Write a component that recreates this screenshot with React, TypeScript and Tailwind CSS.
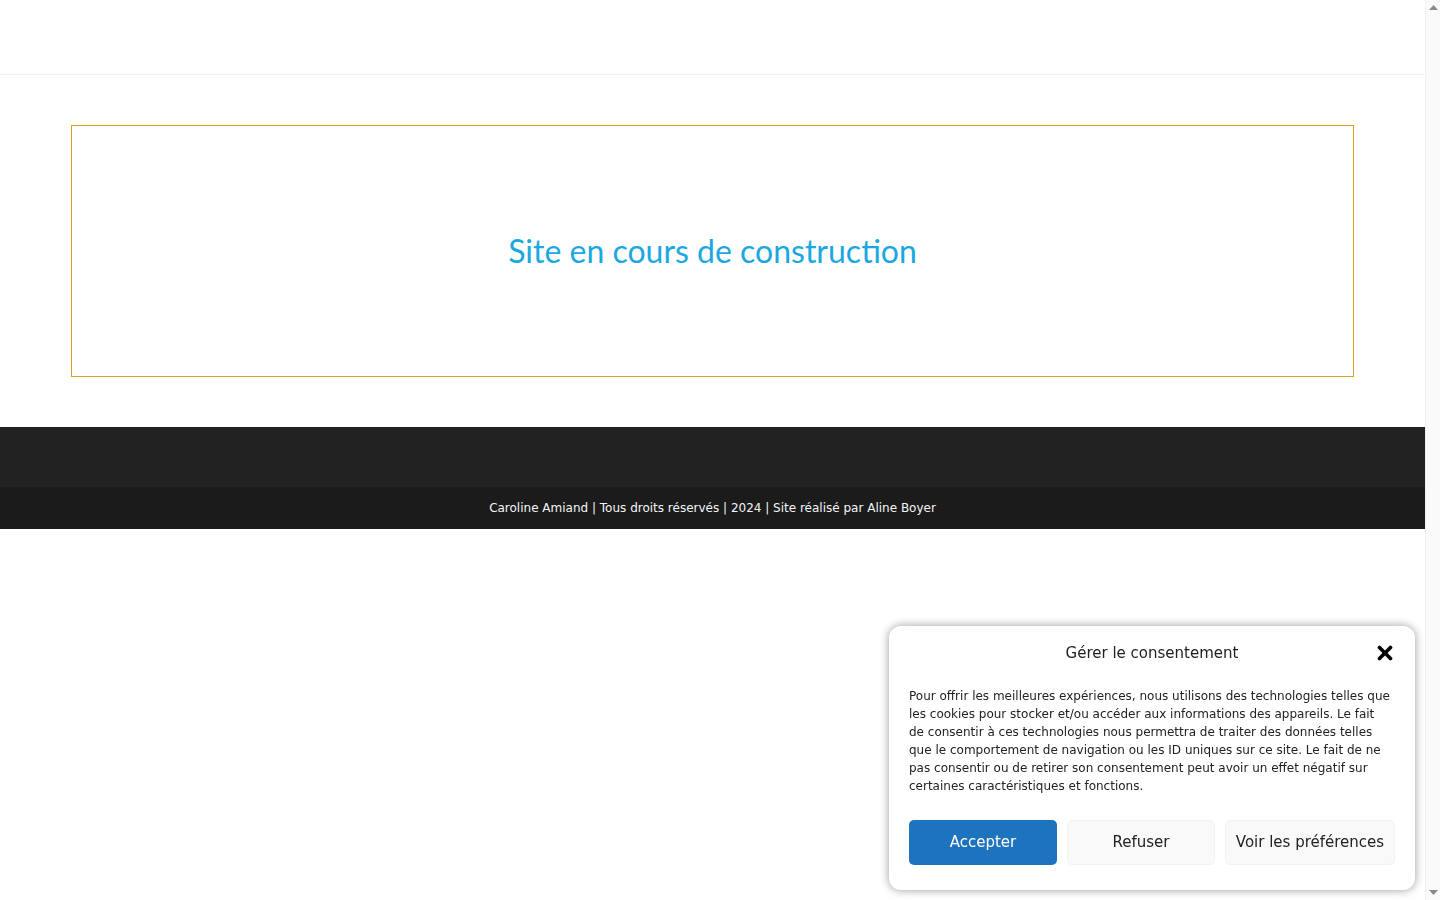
import { X } from 'lucide-react';

const ConsentBanner = () => {
  return (
    <div className="fixed bottom-[10px] right-[25px] w-[526px] rounded-xl bg-white px-5 pt-[15px] pb-[25px] shadow-[0_0_10px_rgba(0,0,0,0.4)] font-['DejaVu_Sans',sans-serif] text-[#222]">
      <div className="relative flex h-[24px] items-center justify-center">
        <h2 className="text-[15px] leading-6">Gérer le consentement</h2>
        <button className="absolute right-[-1px] top-[1px] text-black">
          <X size={22} strokeWidth={4} />
        </button>
      </div>
      <p className="mt-[22px] pr-[4px] text-[12px] leading-[18px]">
        Pour offrir les meilleures expériences, nous utilisons des technologies telles que les
        cookies pour stocker et/ou accéder aux informations des appareils. Le fait de consentir à
        ces technologies nous permettra de traiter des données telles que le comportement de
        navigation ou les ID uniques sur ce site. Le fait de ne pas consentir ou de retirer son
        consentement peut avoir un effet négatif sur certaines caractéristiques et fonctions.
      </p>
      <div className="mt-[25px] flex gap-[10px] text-[15px]">
        <button className="h-[45px] w-[148px] rounded-[5px] bg-[#1e73be] text-white">
          Accepter
        </button>
        <button className="h-[45px] w-[148px] rounded-[5px] border border-[#f2f2f2] bg-[#f9f9f9] text-[#222]">
          Refuser
        </button>
        <button className="h-[45px] flex-1 rounded-[5px] border border-[#f2f2f2] bg-[#f9f9f9] text-[#222]">
          Voir les préférences
        </button>
      </div>
    </div>
  );
};

const Scrollbar = () => (
  <aside className="flex w-[15px] flex-col items-center justify-between border-l border-[#f0f0f0] bg-[#fafafa] py-[5px]">
    <svg width="9" height="5" viewBox="0 0 9 5">
      <path d="M0 5 L4.5 0 L9 5 Z" fill="#8a8a8a" />
    </svg>
    <svg width="9" height="5" viewBox="0 0 9 5">
      <path d="M0 0 L4.5 5 L9 0 Z" fill="#8a8a8a" />
    </svg>
  </aside>
);

export default function App() {
  return (
    <div className="flex h-screen bg-white">
      <div className="flex-1 overflow-hidden">
        <header className="h-[75px] border-b border-[#eeeeee]" />
        <main className="py-[50px]">
          <div className="mx-auto flex h-[252px] w-[90%] items-center justify-center border border-[#d9a41a]">
            <h1 className="font-['Lato',sans-serif] text-[32px] font-normal text-[#1ba8e1]">
              Site en cours de construction
            </h1>
          </div>
        </main>
        <footer className="font-['DejaVu_Sans',sans-serif]">
          <div className="h-[60px] bg-[#222222]" />
          <div className="flex h-[42px] items-center justify-center bg-[#1b1b1b] text-[12px] text-[#f5f5f5]">
            Caroline Amiand | Tous droits réservés | 2024 | Site réalisé par Aline Boyer
          </div>
        </footer>
      </div>
      <Scrollbar />
      <ConsentBanner />
    </div>
  );
}
